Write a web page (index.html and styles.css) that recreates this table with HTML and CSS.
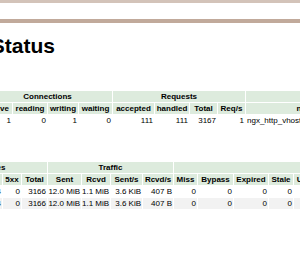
FILE: index.html
```html
<!DOCTYPE html>
<html>
<head>
<meta charset="utf-8">
<title>Nginx Vhost Traffic Status</title>
<link rel="stylesheet" href="styles.css">
</head>
<body>
<div class="bar-top"></div>
<div class="bar-bottom"></div>
<div class="title-wrap"><h1 class="title">Nginx Vhost Traffic Status</h1></div>

<div class="grid t1">
  <div class="g span4">Connections</div>
  <div class="g span4">Requests</div>
  <div class="g span4">Shared memory</div>

  <div class="h">active</div>
  <div class="h">reading</div>
  <div class="h">writing</div>
  <div class="h">waiting</div>
  <div class="h">accepted</div>
  <div class="h">handled</div>
  <div class="h">Total</div>
  <div class="h">Req/s</div>
  <div class="h">name</div>
  <div class="h">maxSize</div>
  <div class="h">usedSize</div>
  <div class="h">usedNode</div>

  <div class="n">1</div>
  <div class="n">0</div>
  <div class="n">1</div>
  <div class="n">0</div>
  <div class="n">111</div>
  <div class="n">111</div>
  <div class="n">3167</div>
  <div class="n">1</div>
  <div class="s">ngx_http_vhost_traffic_status</div>
  <div class="n">1.0 MiB</div>
  <div class="n">3.5 KiB</div>
  <div class="n">1</div>
</div>

<div class="grid t2">
  <div class="g span6">Responses</div>
  <div class="g span4">Traffic</div>
  <div class="g span9">Cache</div>

  <div class="h">1xx</div>
  <div class="h">2xx</div>
  <div class="h">3xx</div>
  <div class="h">4xx</div>
  <div class="h">5xx</div>
  <div class="h">Total</div>
  <div class="h">Sent</div>
  <div class="h">Rcvd</div>
  <div class="h">Sent/s</div>
  <div class="h">Rcvd/s</div>
  <div class="h">Miss</div>
  <div class="h">Bypass</div>
  <div class="h">Expired</div>
  <div class="h">Stale</div>
  <div class="h">Updating</div>
  <div class="h">Revalidated</div>
  <div class="h">Hit</div>
  <div class="h">Scarce</div>
  <div class="h">Total</div>

  <div class="n">0</div>
  <div class="n">3162</div>
  <div class="n">0</div>
  <div class="n">4</div>
  <div class="n">0</div>
  <div class="n">3166</div>
  <div class="n">12.0 MiB</div>
  <div class="n">1.1 MiB</div>
  <div class="n">3.6 KiB</div>
  <div class="n">407 B</div>
  <div class="n">0</div>
  <div class="n">0</div>
  <div class="n">0</div>
  <div class="n">0</div>
  <div class="n">0</div>
  <div class="n">0</div>
  <div class="n">0</div>
  <div class="n">0</div>
  <div class="n">0</div>

  <div class="n alt">0</div>
  <div class="n alt">3162</div>
  <div class="n alt">0</div>
  <div class="n alt">4</div>
  <div class="n alt">0</div>
  <div class="n alt">3166</div>
  <div class="n alt">12.0 MiB</div>
  <div class="n alt">1.1 MiB</div>
  <div class="n alt">3.6 KiB</div>
  <div class="n alt">407 B</div>
  <div class="n alt">0</div>
  <div class="n alt">0</div>
  <div class="n alt">0</div>
  <div class="n alt">0</div>
  <div class="n alt">0</div>
  <div class="n alt">0</div>
  <div class="n alt">0</div>
  <div class="n alt">0</div>
  <div class="n alt">0</div>
</div>
</body>
</html>
```

FILE: styles.css
```css
html, body {
  margin: 0;
  padding: 0;
  overflow: hidden;
  background: #ffffff;
}

body {
  font-family: "Liberation Sans", Arial, Helvetica, sans-serif;
  color: #000000;
}

.bar-top {
  height: 3px;
  background: #d3c3b9;
}

.bar-bottom {
  margin-top: 16px;
  height: 4px;
  background: #c1aa9b;
}

.title-wrap {
  display: flex;
  justify-content: flex-end;
  width: 55px;
  margin-top: 11px;
  height: 24px;
}

.title {
  flex-shrink: 0;
  margin: 0;
  font-size: 21px;
  line-height: 24px;
  font-weight: bold;
  white-space: nowrap;
  color: #000000;
}

.grid {
  display: grid;
  grid-auto-rows: 11px;
  gap: 1px;
  font-size: 8px;
  line-height: 11px;
  white-space: nowrap;
}

.t1 {
  margin-top: 33px;
  margin-left: -17px;
  grid-template-columns: 29px 34px 30px 33px 41px 34px 27px 27px 122px 40px 40px 40px;
}

.t2 {
  margin-top: 36px;
  margin-left: -79px;
  grid-template-columns: 18px 24px 18px 18px 18px 25px 33px 28px 31px 30px 23px 35px 34px 24px 40px 50px 22px 30px 26px;
}

.g, .h {
  background: #ddebdd;
  font-weight: bold;
  text-align: center;
}

.span4 { grid-column: span 4; }
.span6 { grid-column: span 6; }
.span9 { grid-column: span 9; }

.n {
  text-align: right;
  padding-right: 1px;
}

.s {
  text-align: left;
  padding-left: 1px;
}

.alt {
  background: #f2f2f2;
}
```
